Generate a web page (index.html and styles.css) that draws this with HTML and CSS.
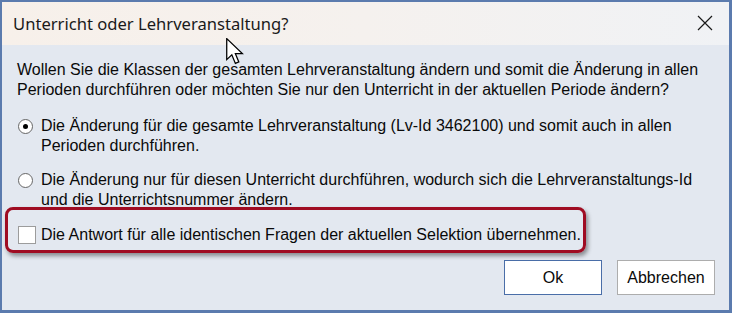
FILE: index.html
```html
<!DOCTYPE html>
<html lang="de">
<head>
<meta charset="utf-8">
<title>Unterricht oder Lehrveranstaltung?</title>
<link rel="stylesheet" href="styles.css">
</head>
<body>
<div class="window">
  <div class="titlebar">
    <span class="title">Unterricht oder Lehrveranstaltung?</span>
    <svg class="close" width="16" height="16" viewBox="0 0 16 16"><path d="M1 1 L15 15 M15 1 L1 15" stroke="#1a1a1a" stroke-width="1.2" fill="none"/></svg>
  </div>
  <div class="content">
    <p class="question">Wollen Sie die Klassen der gesamten Lehrveranstaltung ändern und somit die Änderung in allen Perioden durchführen oder möchten Sie nur den Unterricht in der aktuellen Periode ändern?</p>
    <div class="option first">
      <span class="radio checked"></span>
      <span class="label">Die Änderung für die gesamte Lehrveranstaltung (Lv-Id 3462100) und somit auch in allen Perioden durchführen.</span>
    </div>
    <div class="option second">
      <span class="radio"></span>
      <span class="label">Die Änderung nur für diesen Unterricht durchführen, wodurch sich die Lehrveranstaltungs-Id und die Unterrichtsnummer ändern.</span>
    </div>
    <div class="option check">
      <span class="checkbox"></span>
      <span class="label">Die Antwort für alle identischen Fragen der aktuellen Selektion übernehmen.</span>
    </div>
    <div class="buttons">
      <button class="btn default">Ok</button>
      <button class="btn">Abbrechen</button>
    </div>
  </div>
  <div class="highlight"></div>
  <svg class="cursor" width="14" height="22" viewBox="0 0 14 22"><path d="M0.5 0.5 L0.5 17 L4.5 13.2 L7.3 20 L10 18.8 L7.3 12.3 L12.8 12.3 Z" fill="#fff" stroke="#000" stroke-width="1" stroke-linejoin="miter"/></svg>
</div>
</body>
</html>
```

FILE: styles.css
```css
* { box-sizing: border-box; }
html, body { margin: 0; padding: 0; }
body { width: 732px; height: 313px; overflow: hidden; background: #e3e8f0; }

.window {
  position: relative;
  width: 732px;
  height: 313px;
  border: 2px solid #5b7bae;
  border-right-width: 3px;
  border-bottom-width: 3px;
  background: #e3e8f0;
  display: flex;
  flex-direction: column;
  font-family: "Liberation Sans", Arial, sans-serif;
  font-size: 16px;
  color: #0a0a0a;
}

.titlebar {
  height: 43px;
  flex: none;
  display: flex;
  align-items: center;
  justify-content: space-between;
  padding: 0 16px 0 11px;
  background: linear-gradient(90deg, #f7f0ea 0%, #f5f1ee 50%, #f0f2f5 100%);
}
.title {
  font-family: "Noto Sans", "Open Sans", sans-serif;
  font-size: 16.6px;
  color: #1a1a1a;
  margin-top: -1px;
}
.close { margin-top: -1px; }

.content {
  flex: 1;
  display: flex;
  flex-direction: column;
  padding: 15px 14px 0 15px;
}

.question {
  margin: 0;
  line-height: 20px;
}

.option {
  display: flex;
  align-items: flex-start;
  line-height: 20px;
}
.option.first { margin-top: 16px; }
.option.second { margin-top: 14px; }
.option.check { margin-top: 15px; align-items: center; }

.radio {
  flex: none;
  width: 15px;
  height: 15px;
  margin: 3px 8px 0 1px;
  border: 1px solid #666;
  border-radius: 50%;
  background: #fff;
  display: flex;
  align-items: center;
  justify-content: center;
}
.radio.checked::after {
  content: "";
  width: 5px;
  height: 5px;
  border-radius: 50%;
  background: #000;
}

.checkbox {
  flex: none;
  width: 18px;
  height: 18px;
  margin: 0 5px 0 1px;
  border: 1px solid #9c9c9c;
  background: #fff;
}

.buttons {
  display: flex;
  justify-content: flex-end;
  gap: 15px;
  margin-top: 15px;
}
.btn {
  width: 98px;
  height: 35px;
  background: #fff;
  border: 1px solid #adadad;
  font-family: "Liberation Sans", Arial, sans-serif;
  font-size: 16px;
  color: #0a0a0a;
  padding: 0;
}
.btn.default { border-color: #4a6ea8; }

.highlight {
  position: absolute;
  left: 3px;
  top: 205px;
  width: 581px;
  height: 46px;
  border: 3.5px solid #9f0c22;
  border-radius: 8px;
  box-shadow: 2px 3px 4px rgba(0, 0, 0, 0.4);
  pointer-events: none;
}

.cursor {
  position: absolute;
  left: 224px;
  top: 36px;
  width: 18px;
  height: 28px;
}
```
